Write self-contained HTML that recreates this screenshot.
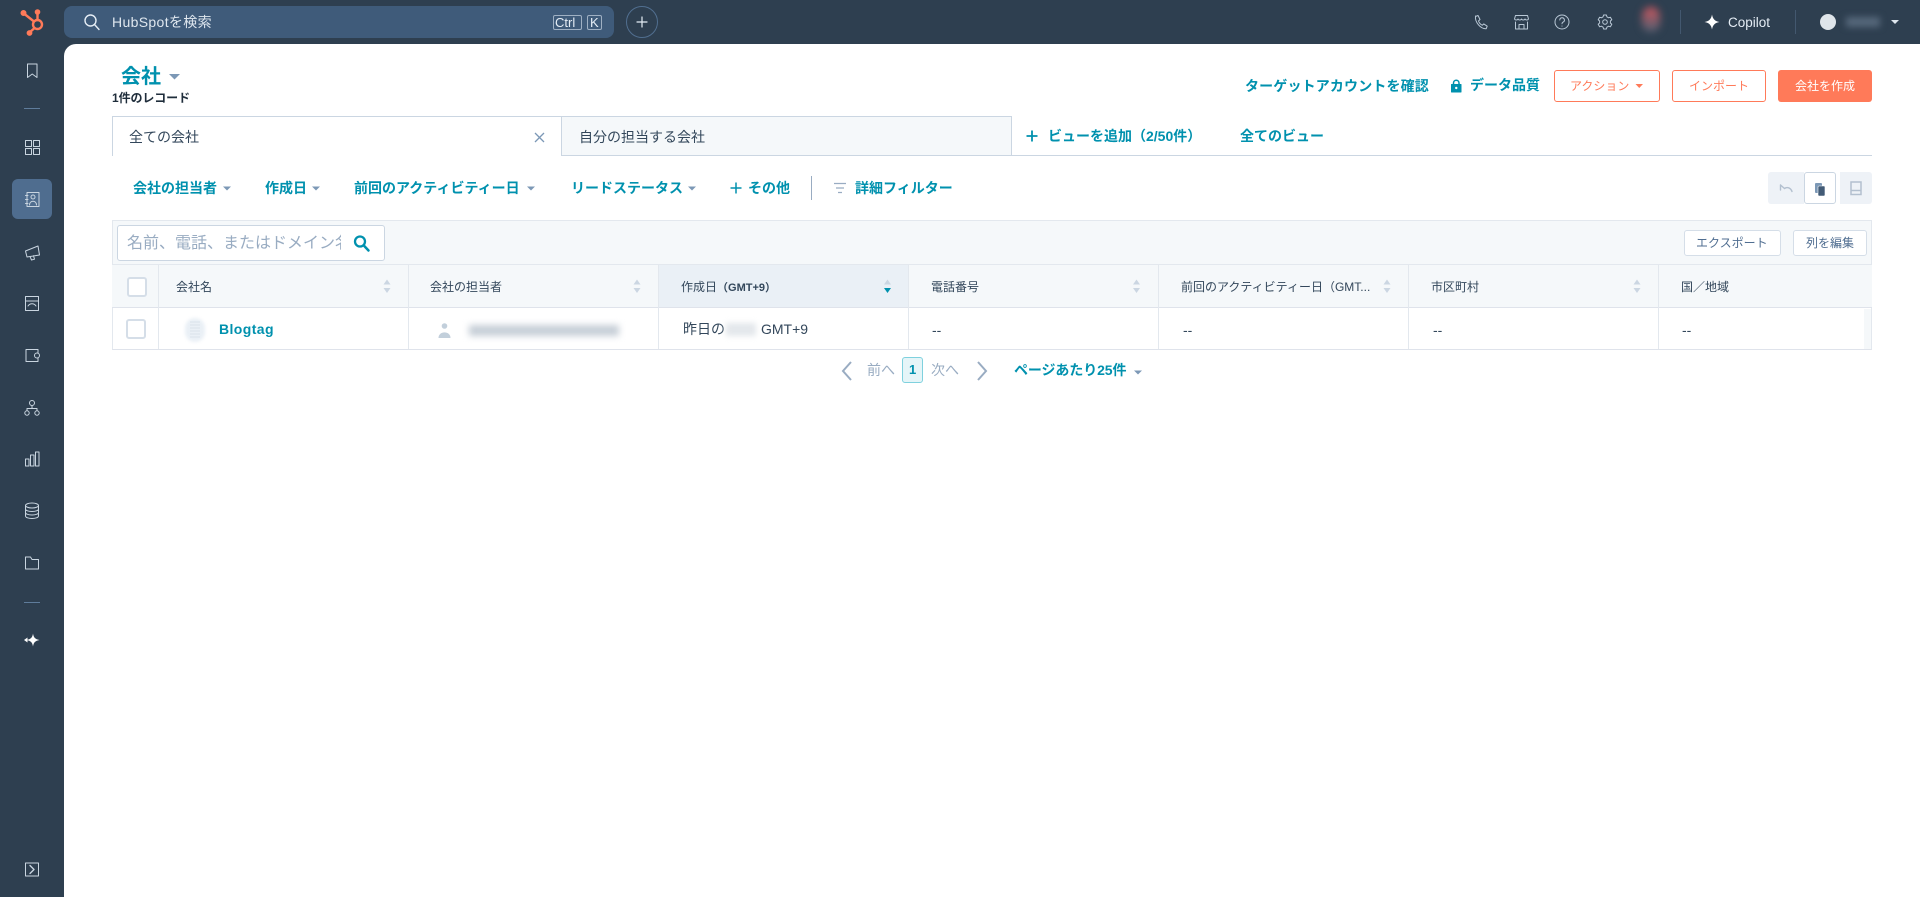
<!DOCTYPE html>
<html lang="ja">
<head>
<meta charset="utf-8">
<title>会社 | HubSpot</title>
<style>
html,body{margin:0;padding:0;width:1920px;height:897px;overflow:hidden;background:#2e3f50}
body{position:relative;font-family:"Liberation Sans","Noto Sans CJK JP",sans-serif;color:#33475b;font-size:14px}
#wrap{position:absolute;left:0;top:0;width:1920px;height:897px;overflow:hidden;filter:blur(.35px)}
.a{position:absolute;box-sizing:border-box}
.t{position:absolute;line-height:0;white-space:nowrap}
.b{font-weight:700}
.teal{color:#0091ae}
#main{position:absolute;left:64px;top:44px;width:1856px;height:853px;background:#fff;border-top-left-radius:12px}
svg{position:absolute;left:0;top:0;overflow:visible}
.cell{position:absolute;top:264px;height:85px;width:1px;background:#e3e8ee}
</style>
</head>
<body>
<div id="wrap">
<div id="main"></div>

<!-- top bar -->
<div class="a" style="left:64px;top:6px;width:550px;height:32px;background:#3f5b7a;border-radius:8px"></div>
<div class="t" style="left:112px;top:22px;color:#dfe7ef;font-size:14px;letter-spacing:.35px">HubSpotを検索</div>
<div class="a" style="left:553px;top:15px;width:29px;height:15px;border:1px solid #9fb0c3;border-radius:2px"></div>
<div class="t" style="left:555px;top:23px;color:#e5edf5;font-size:13px">Ctrl</div>
<div class="a" style="left:587px;top:15px;width:15px;height:15px;border:1px solid #9fb0c3;border-radius:2px"></div>
<div class="t" style="left:590px;top:23px;color:#e5edf5;font-size:13px">K</div>
<div class="a" style="left:626px;top:6px;width:32px;height:32px;border:1px solid #516f90;border-radius:50%"></div>
<div class="a" style="left:1642px;top:7px;width:18px;height:25px;background:linear-gradient(#c9555c,#4f6072);border-radius:10px;filter:blur(4px)"></div>
<div class="a" style="left:1680px;top:10px;width:1px;height:24px;background:#43586f"></div>
<div class="t" style="left:1728px;top:23px;color:#e5edf5;font-size:13.500px">Copilot</div>
<div class="a" style="left:1795px;top:10px;width:1px;height:24px;background:#43586f"></div>
<div class="a" style="left:1820px;top:14px;width:16px;height:16px;background:#dfe5ea;border-radius:50%"></div>
<div class="a" style="left:1846px;top:17px;width:34px;height:10px;background:#56687b;filter:blur(3.500px)"></div>

<!-- sidebar active -->
<div class="a" style="left:12px;top:179px;width:40px;height:40px;background:#4f6d8f;border-radius:6px"></div>
<div class="a" style="left:24px;top:108px;width:16px;height:1px;background:#5f7c9b"></div>
<div class="a" style="left:24px;top:602px;width:16px;height:1px;background:#5f7c9b"></div>

<!-- heading -->
<div class="t b teal" style="left:121px;top:77px;font-size:20px">会社</div>
<div class="t b" style="left:112px;top:98px;font-size:12px;letter-spacing:-.1px;color:#1f2d3b">1件のレコード</div>

<div class="t b teal" style="left:1245px;top:86px;font-size:14px;letter-spacing:.15px">ターゲットアカウントを確認</div>
<div class="t b teal" style="left:1470px;top:85px;font-size:14px">データ品質</div>
<div class="a" style="left:1554px;top:70px;width:106px;height:32px;border:1px solid #ff7a59;border-radius:3px;background:#fff"></div>
<div class="t" style="left:1570px;top:86px;font-size:12px;color:#ff7a59">アクション</div>
<div class="a" style="left:1672px;top:70px;width:94px;height:32px;border:1px solid #ff7a59;border-radius:3px;background:#fff"></div>
<div class="t" style="left:1689px;top:86px;font-size:12px;color:#ff7a59">インポート</div>
<div class="a" style="left:1778px;top:70px;width:94px;height:32px;background:#ff7a59;border-radius:3px"></div>
<div class="t" style="left:1795px;top:86px;font-size:12px;color:#fff">会社を作成</div>

<!-- tabs -->
<div class="a" style="left:112px;top:155px;width:1760px;height:1px;background:#cbd6e2"></div>
<div class="a" style="left:112px;top:116px;width:450px;height:40px;background:#fff;border:1px solid #cbd6e2;border-bottom:0"></div>
<div class="a" style="left:562px;top:116px;width:450px;height:39px;background:#f5f8fa;border:1px solid #cbd6e2;border-left:0;border-bottom:0"></div>
<div class="t" style="left:129px;top:137px">全ての会社</div>
<div class="t" style="left:579px;top:137px">自分の担当する会社</div>
<div class="t b teal" style="left:1048px;top:136px">ビューを追加（2/50件）</div>
<div class="t b teal" style="left:1240px;top:136px">全てのビュー</div>

<!-- filters -->
<div class="t b teal" style="left:133px;top:188px">会社の担当者</div>
<div class="t b teal" style="left:265px;top:188px">作成日</div>
<div class="t b teal" style="left:354px;top:188px">前回のアクティビティー日</div>
<div class="t b teal" style="left:571px;top:188px">リードステータス</div>
<div class="t b teal" style="left:748px;top:188px">その他</div>
<div class="a" style="left:811px;top:176px;width:1px;height:24px;background:#99acc2"></div>
<div class="t b teal" style="left:855px;top:188px">詳細フィルター</div>

<div class="a" style="left:1768px;top:172px;width:36px;height:32px;background:#eef2f7;border-radius:3px 0 0 3px"></div>
<div class="a" style="left:1804px;top:172px;width:32px;height:32px;background:#fff;border:1px solid #cbd6e2;border-radius:3px"></div>
<div class="a" style="left:1840px;top:172px;width:32px;height:32px;background:#eef2f7;border-radius:0 3px 3px 0"></div>

<!-- table -->
<div class="a" style="left:112px;top:220px;width:1760px;height:44px;background:#f5f8fa;border:1px solid #e3e8ee;border-bottom:0"></div>
<div class="a" style="left:117px;top:225px;width:268px;height:36px;background:#fff;border:1px solid #cbd6e2;border-radius:3px"></div>
<div class="a" style="left:127px;top:227px;width:214px;height:32px;overflow:hidden"><div class="t" style="left:0;top:17px;font-size:16px;color:#99acc2">名前、電話、またはドメイン名で検索</div></div>
<div class="a" style="left:1684px;top:230px;width:97px;height:26px;background:#fff;border:1px solid #d5dee8;border-radius:3px"></div>
<div class="t" style="left:1696px;top:243px;font-size:12px;color:#506e91">エクスポート</div>
<div class="a" style="left:1793px;top:230px;width:74px;height:26px;background:#fff;border:1px solid #d5dee8;border-radius:3px"></div>
<div class="t" style="left:1806px;top:243px;font-size:12px;color:#506e91">列を編集</div>

<div class="a" style="left:112px;top:264px;width:1760px;height:44px;background:#f5f8fa;border-top:1px solid #e3e8ee;border-bottom:1px solid #dfe3eb"></div>
<div class="a" style="left:658px;top:265px;width:250px;height:42px;background:#eaf0f6"></div>
<div class="a" style="left:112px;top:308px;width:1760px;height:42px;background:#fff;border-bottom:1px solid #dfe3eb;border-left:1px solid #e3e8ee;border-right:1px solid #e3e8ee"></div>
<div class="a" style="left:1864px;top:309px;width:7px;height:40px;background:#f5f8fa"></div>
<div class="cell" style="left:158px"></div>
<div class="cell" style="left:408px"></div>
<div class="cell" style="left:658px"></div>
<div class="cell" style="left:908px"></div>
<div class="cell" style="left:1158px"></div>
<div class="cell" style="left:1408px"></div>
<div class="cell" style="left:1658px"></div>

<div class="a" style="left:127px;top:277px;width:20px;height:20px;background:#fff;border:2px solid #d5dee8;border-radius:3px"></div>
<div class="a" style="left:126px;top:319px;width:20px;height:20px;background:#fff;border:2px solid #d5dee8;border-radius:3px"></div>

<div class="t" style="left:176px;top:287px;font-size:12px">会社名</div>
<div class="t" style="left:430px;top:287px;font-size:12px">会社の担当者</div>
<div class="t" style="left:681px;top:287px;font-size:12px">作成日<span class="b" style="font-size:11px">（GMT+9）</span></div>
<div class="t" style="left:931px;top:287px;font-size:12px">電話番号</div>
<div class="t" style="left:1181px;top:287px;font-size:12px">前回のアクティビティー日（GMT...</div>
<div class="t" style="left:1431px;top:287px;font-size:12px">市区町村</div>
<div class="t" style="left:1681px;top:287px;font-size:12px">国／地域</div>

<div class="a" style="left:185px;top:318px;width:20px;height:24px;background:#eaf0f6;border-radius:10px;filter:blur(1.500px)"></div>
<div class="t b teal" style="left:219px;top:329px;font-size:14px;letter-spacing:.4px">Blogtag</div>
<div class="a" style="left:469px;top:325px;width:150px;height:11px;background:#c6ced7;filter:blur(3.500px)"></div>
<div class="t" style="left:683px;top:329px;font-size:14px">昨日の</div>
<div class="a" style="left:726px;top:323px;width:30px;height:13px;background:#e3e7eb;filter:blur(3px)"></div>
<div class="t" style="left:761px;top:329px;font-size:14px">GMT+9</div>
<div class="t" style="left:932px;top:330px;font-size:14px">--</div>
<div class="t" style="left:1183px;top:330px;font-size:14px">--</div>
<div class="t" style="left:1433px;top:330px;font-size:14px">--</div>
<div class="t" style="left:1682px;top:330px;font-size:14px">--</div>

<!-- pagination -->
<div class="t" style="left:867px;top:370px;font-size:14px;color:#99acc2">前へ</div>
<div class="a" style="left:902px;top:357px;width:21px;height:26px;background:#e5f5f8;border:1px solid #7fd1de;border-radius:3px"></div>
<div class="t b teal" style="left:909px;top:370px;font-size:13px">1</div>
<div class="t" style="left:931px;top:370px;font-size:14px;color:#99acc2">次へ</div>
<div class="t b teal" style="left:1014px;top:370px;font-size:14px;letter-spacing:-.1px">ページあたり25件</div>

<svg width="1920" height="897" viewBox="0 0 1920 897" fill="none">
  <!-- hubspot logo -->
  <g stroke="#ff7a59" stroke-width="2.400" stroke-linecap="round">
    <circle cx="37.500" cy="24.500" r="4.500"/>
    <path d="M37.500 20V13M24.500 14l9.500 7.500M34 28.500l-4.500 4"/>
    <circle cx="37.500" cy="12" r="1.600" fill="#ff7a59"/>
    <circle cx="23.500" cy="13" r="1.800" fill="#ff7a59"/>
    <circle cx="29.500" cy="33" r="1.700" fill="#ff7a59"/>
  </g>
  <!-- search -->
  <g stroke="#e5edf5" stroke-width="1.400" stroke-linecap="round">
    <circle cx="90.500" cy="20.500" r="5.500"/><path d="M94.500 24.500l4.500 5"/>
    <path d="M642 17v10M637 22h10" stroke-width="1.200"/>
  </g>
  <!-- top right icons -->
  <g stroke="#b9c8d6" stroke-width="1" stroke-linecap="round" stroke-linejoin="round">
    <path d="M1475.500 16.500l2.500-1 2 4-1.500 1.500c.6 1.800 2 3.400 3.800 4.200l1.500-1.300 3.400 2.300-1 2.500c-5.600.3-11.500-6.500-10.700-12.700z"/>
    <path d="M1515.500 15.500h12M1515.500 15.500l-1 3.500a2 2 0 0 0 3.500 0 2 2 0 0 0 3.500 0 2 2 0 0 0 3.500 0 2 2 0 0 0 3.500 0l-1-3.500M1515.500 22v7h12V22M1519 29v-4.500h5v4.500"/>
    <circle cx="1562" cy="22" r="7"/>
    <path d="M1559.800 20a2.300 2.300 0 1 1 3.300 2.100c-.8.500-1.100 1-1.100 1.600M1562 26v.1"/>
    <circle cx="1605" cy="22" r="2.300"/>
    <path d="M1603.600 15h2.800l.5 1.800 1.700 1 1.800-.6 1.400 2.500-1.400 1.300v2l1.400 1.300-1.400 2.500-1.800-.6-1.700 1-.5 1.800h-2.800l-.5-1.800-1.700-1-1.800.6-1.400-2.500 1.400-1.300v-2l-1.400-1.300 1.400-2.500 1.800.6 1.700-1z"/>
  </g>
  <path d="M1712 14.500c.8 4.500 2.800 6.700 7.500 7.500-4.700.8-6.700 3-7.500 7.500-.8-4.500-2.800-6.700-7.500-7.500 4.700-.8 6.700-3 7.500-7.500z" fill="#fff"/>
  <path d="M1891 20h8l-4 4z" fill="#dfe7ef"/>

  <!-- sidebar icons -->
  <g stroke="#c9d5e0" stroke-width="1" stroke-linejoin="round" stroke-linecap="round">
    <path d="M27.500 64h9.500v13.500l-4.750-3.500-4.750 3.500z"/>
    <rect x="25.500" y="140.500" width="6" height="6"/><rect x="33.500" y="140.500" width="6" height="6"/>
    <rect x="25.500" y="148.500" width="6" height="6"/><rect x="33.500" y="148.500" width="6" height="6"/>
    <rect x="27" y="192.500" width="12" height="14"/>
    <circle cx="33" cy="197" r="2"/><path d="M29.500 205c0-5 7-5 7 0M25.500 195.500h2.500M25.500 199.500h2.500M25.500 203.500h2.500"/>
    <path d="M25.500 251l12.500-5 1.500 9-12.500 2zM30 256.500l1.500 3.500 3-.8-1-3.500"/>
    <rect x="25.500" y="296.500" width="13" height="14"/><path d="M25.500 301h13M28 306c2-3 6-3 8 0"/>
    <path d="M38 349.500H26v12h12M38 349.500v3.500M38 358v3.500"/><circle cx="37" cy="355.500" r="2.500"/>
    <circle cx="32" cy="403" r="2.500"/><circle cx="27" cy="413" r="2.200"/><circle cx="37" cy="413" r="2.200"/>
    <path d="M32 405.500v3M27 410.500v-2h10v2"/>
    <rect x="25.500" y="459" width="3.500" height="7"/><rect x="30.500" y="455" width="3.500" height="11"/><rect x="35.500" y="452" width="3.500" height="14"/>
    <ellipse cx="32" cy="505.500" rx="6.500" ry="2.500"/>
    <path d="M25.500 505.500v10.500c0 1.500 3 2.500 6.500 2.500s6.500-1 6.500-2.500v-10.500M25.500 509c0 1.500 3 2.500 6.500 2.500s6.500-1 6.500-2.500M25.500 512.500c0 1.500 3 2.500 6.500 2.500s6.500-1 6.500-2.500"/>
    <path d="M25.500 557h5l1.500 2.500h6.500v9.500h-13z"/>
    <rect x="25.500" y="863" width="13" height="13"/><path d="M30 865.500l4 4-4 4" stroke-width="1.400"/>
  </g>
  <path d="M33 633.500c.6 4 2.200 5.700 6.500 6.500-4.300.8-5.900 2.500-6.500 6.500-.6-4-2.200-5.700-6.500-6.500 4.300-.8 5.900-2.500 6.500-6.500z" fill="#fff"/>
  <path d="M24 640l3.500-2.500v5z" fill="#fff"/>

  <!-- heading carets -->
  <path d="M169 74h11l-5.500 5.500z" fill="#7c98b6"/>
  <path d="M223 186.500h8l-4 4z M312 186.500h8l-4 4z M527 186.500h8l-4 4z M688 186.500h8l-4 4z" fill="#7c98b6"/>
  <path d="M1635.500 84h7.500l-3.750 4z" fill="#ff7a59"/>
  <path d="M1134 370.500h8l-4 4z" fill="#7c98b6"/>
  <!-- lock -->
  <path d="M1451.500 84.500h9.500v7.500h-9.500z" fill="#0091ae" stroke="#0091ae" stroke-linejoin="round"/>
  <path d="M1453.500 84.500v-1.500a2.750 2.750 0 0 1 5.500 0v1.500" stroke="#0091ae" stroke-width="1.500"/>
  <circle cx="1456.250" cy="88" r="1.200" fill="#fff"/>
  <!-- tab close -->
  <path d="M535 133l9 9M544 133l-9 9" stroke="#7c98b6" stroke-width="1.300"/>
  <!-- plus add view -->
  <path d="M1032 130.500v11M1026.500 136h11" stroke="#0091ae" stroke-width="1.800"/>
  <path d="M736 182.500v11M730.500 188h11" stroke="#0091ae" stroke-width="1.500"/>
  <path d="M834 183.500h12M836 188h8M838 192.500h4" stroke="#99acc2" stroke-width="1.300"/>
  <!-- toolbar icons -->
  <path d="M1780.500 190v-5M1780.500 185l4 3.500c2.500-1.800 6-1 7.500 3" stroke="#b3c0cf" stroke-width="1.400" stroke-linecap="round"/>
  <rect x="1815" y="183" width="7" height="10" rx="1" fill="#7c98b6"/>
  <rect x="1818" y="186" width="7" height="10" rx="1" fill="#425b76" stroke="#fff" stroke-width=".6"/>
  <path d="M1851 182h10v12.500h-10zM1851 190.500h10" stroke="#b3c0cf" stroke-width="1.500"/>
  <!-- table search -->
  <circle cx="360" cy="241.500" r="5" stroke="#0091ae" stroke-width="2.300"/>
  <path d="M363.800 245.500l4.700 5" stroke="#0091ae" stroke-width="2.500" stroke-linecap="round"/>
  <!-- sort carets -->
  <g fill="#cbd6e2">
    <path d="M383.500 284.500l3.500-5 3.500 5zM383.500 288l3.500 5 3.500-5z"/>
    <path d="M633.500 284.500l3.500-5 3.500 5zM633.500 288l3.500 5 3.500-5z"/>
    <path d="M884 284.500l3.500-5 3.500 5z"/>
    <path d="M1133 284.500l3.500-5 3.500 5zM1133 288l3.500 5 3.500-5z"/>
    <path d="M1383.500 284.500l3.500-5 3.500 5zM1383.500 288l3.500 5 3.500-5z"/>
    <path d="M1633.500 284.500l3.500-5 3.500 5zM1633.500 288l3.500 5 3.500-5z"/>
  </g>
  <path d="M884 288h7l-3.500 5z" fill="#0091ae"/>
  <!-- row icons -->
  <g stroke="#d3dde7" stroke-width=".8"><path d="M190 322h10M190 325h10M190 328h10M190 331h10M190 334h10M190 337h10"/></g>
  <circle cx="444.500" cy="326" r="2.800" fill="#c2cfdb"/>
  <path d="M438.500 338c0-7.500 12-7.500 12 0z" fill="#c2cfdb"/>
  <!-- pagination chevrons -->
  <path d="M851 362l-8 9 8 9" stroke="#99acc2" stroke-width="2"/>
  <path d="M978 362l8 9-8 9" stroke="#99acc2" stroke-width="2"/>
</svg>
</div>
</body>
</html>
